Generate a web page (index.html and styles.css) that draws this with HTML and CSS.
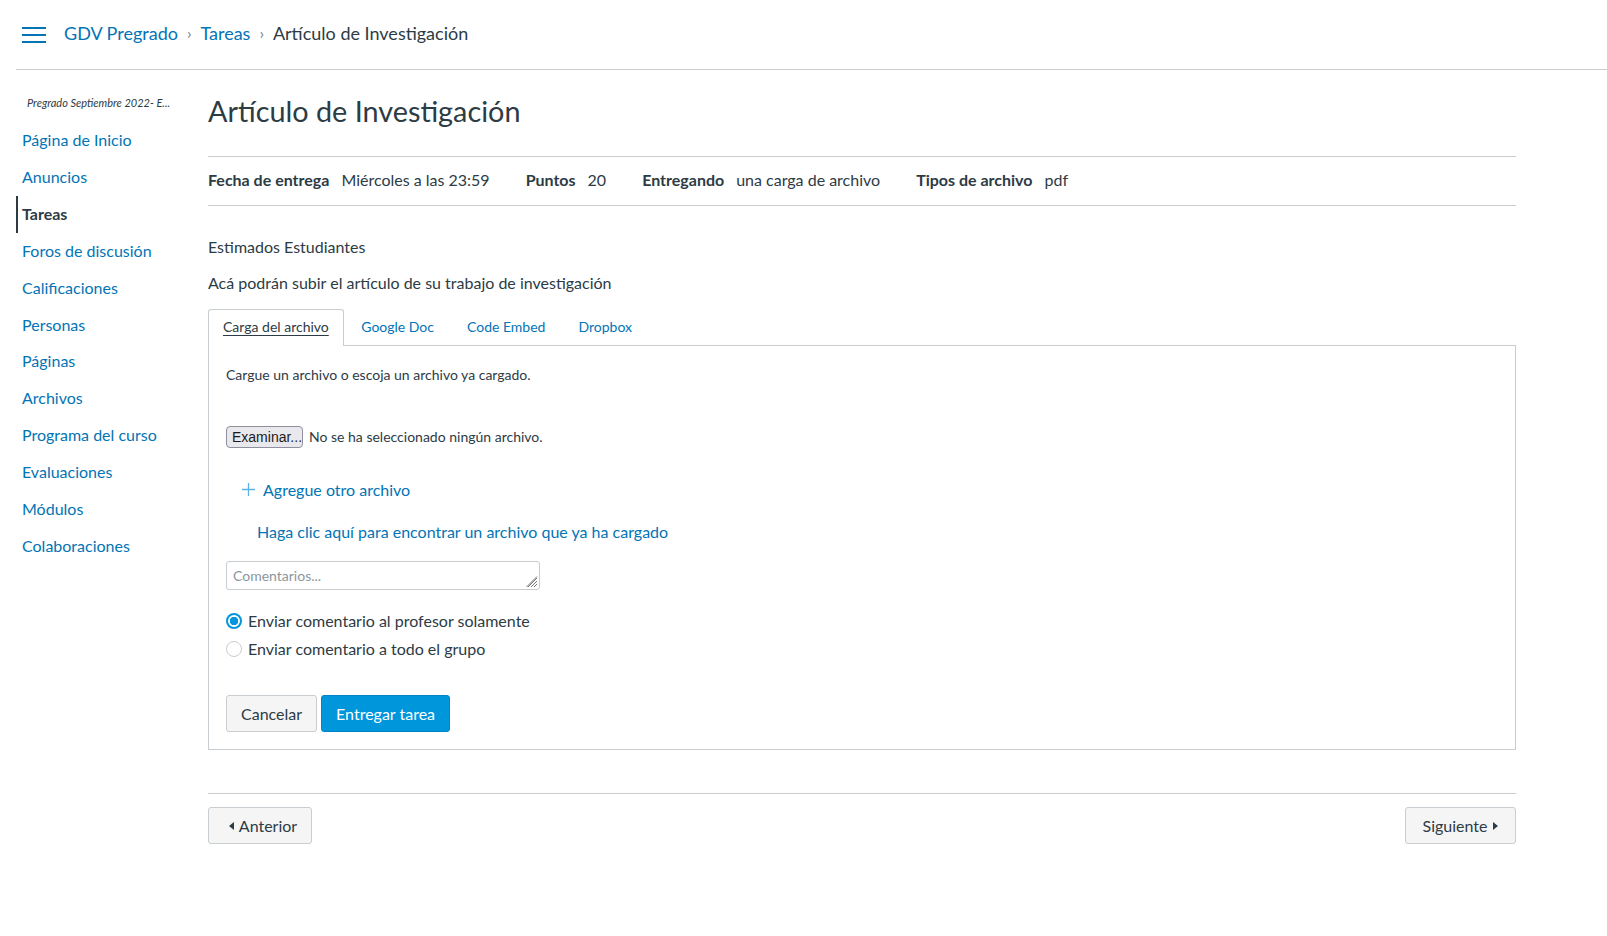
FILE: index.html
```html
<!DOCTYPE html>
<html lang="es">
<head>
<meta charset="utf-8">
<title>Artículo de Investigación</title>
<link rel="stylesheet" href="styles.css">
</head>
<body>
<header class="topbar">
  <button class="hamburger" aria-label="Menú">
    <svg width="24" height="18" viewBox="0 0 24 18"><rect x="0" y="0" width="24" height="2" fill="#0374b5"/><rect x="0" y="7" width="24" height="2" fill="#0374b5"/><rect x="0" y="14" width="24" height="2" fill="#0374b5"/></svg>
  </button>
  <nav class="crumbs">
    <a href="#">GDV Pregrado</a>
    <span class="sep">›</span>
    <a href="#">Tareas</a>
    <span class="sep">›</span>
    <span class="current">Artículo de Investigación</span>
  </nav>
</header>
<div class="layout">
  <aside class="sidebar">
    <div class="course">Pregrado Septiembre 2022- E...</div>
    <ul class="nav">
      <li><a href="#">Página de Inicio</a></li>
      <li><a href="#">Anuncios</a></li>
      <li class="active"><a href="#">Tareas</a></li>
      <li><a href="#">Foros de discusión</a></li>
      <li><a href="#">Calificaciones</a></li>
      <li><a href="#">Personas</a></li>
      <li><a href="#">Páginas</a></li>
      <li><a href="#">Archivos</a></li>
      <li><a href="#">Programa del curso</a></li>
      <li><a href="#">Evaluaciones</a></li>
      <li><a href="#">Módulos</a></li>
      <li><a href="#">Colaboraciones</a></li>
    </ul>
  </aside>
  <main class="main">
    <h1 class="title">Artículo de Investigación</h1>
    <div class="details">
      <span class="item"><b>Fecha de entrega</b><span>Miércoles a las 23:59</span></span>
      <span class="item"><b>Puntos</b><span>20</span></span>
      <span class="item"><b>Entregando</b><span>una carga de archivo</span></span>
      <span class="item"><b>Tipos de archivo</b><span>pdf</span></span>
    </div>
    <div class="desc">
      <p>Estimados Estudiantes</p>
      <p>Acá podrán subir el artículo de su trabajo de investigación</p>
    </div>
    <ul class="tabs">
      <li class="tab active"><a href="#">Carga del archivo</a></li>
      <li class="tab"><a href="#">Google Doc</a></li>
      <li class="tab"><a href="#">Code Embed</a></li>
      <li class="tab"><a href="#">Dropbox</a></li>
    </ul>
    <div class="panel">
      <p class="hint">Cargue un archivo o escoja un archivo ya cargado.</p>
      <div class="file-row">
        <span class="file-btn">Examinar...</span>
        <span class="file-text">No se ha seleccionado ningún archivo.</span>
      </div>
      <div class="add-row">
        <svg class="plus" width="13" height="13" viewBox="0 0 13 13"><path d="M6.5 0v13M0 6.5h13" stroke="#5db2e6" stroke-width="1.3" fill="none"/></svg>
        <a href="#">Agregue otro archivo</a>
      </div>
      <div class="find-row"><a href="#">Haga clic aquí para encontrar un archivo que ya ha cargado</a></div>
      <div class="comment">
        <span class="placeholder">Comentarios...</span>
        <svg class="grip" width="12" height="12" viewBox="0 0 12 12"><path d="M11 2L2 11M11 5L5 11M11 8L8 11M11 0.5L0.5 11" stroke="#666" stroke-width="0.9" fill="none"/></svg>
      </div>
      <div class="radios">
        <label class="radio"><span class="dot checked"></span>Enviar comentario al profesor solamente</label>
        <label class="radio"><span class="dot"></span>Enviar comentario a todo el grupo</label>
      </div>
      <div class="actions">
        <button class="btn">Cancelar</button>
        <button class="btn primary">Entregar tarea</button>
      </div>
    </div>
    <div class="pager">
      <button class="btn pbtn prev"><span class="tri left"></span>Anterior</button>
      <button class="btn pbtn next">Siguiente<span class="tri right"></span></button>
    </div>
  </main>
</div>
</body>
</html>
```
FILE: styles.css
```css
* { box-sizing: border-box; }
html, body { margin: 0; padding: 0; background: #fff; }
body {
  font-family: Lato, "Liberation Sans", sans-serif;
  color: #2d3b45;
  font-size: 16px;
}
a { color: #0374b5; text-decoration: none; }
p { margin: 0; }

.topbar {
  margin-left: 16px;
  height: 70px;
  border-bottom: 1px solid #c7cdd1;
  display: flex;
  align-items: center;
  padding-left: 6px;
}
.hamburger {
  background: none;
  border: 0;
  padding: 0;
  margin: 2px 0 0 0;
  width: 24px;
  height: 18px;
  display: block;
}
.hamburger svg { display: block; }
.crumbs {
  margin-left: 18px;
  font-size: 18px;
  display: flex;
  align-items: center;
  margin-top: -4px;
}
.crumbs .sep { color: #73818c; margin: 0 9px; font-size: 16px; }
.crumbs .current { color: #2d3b45; }

.layout { display: flex; }
.sidebar {
  width: 192px;
  margin-left: 16px;
  padding-top: 25px;
  flex: none;
}
.course {
  font-size: 11px;
  font-style: italic;
  line-height: 16px;
  padding-left: 11px;
  margin-bottom: 11px;
  white-space: nowrap;
}
.nav { list-style: none; margin: 0; padding: 0; }
.nav li {
  border-left: 2px solid transparent;
  padding: 8px 0 8px 4px;
  line-height: 20.9px;
  font-size: 16px;
}
.nav li.active { border-left-color: #2d3b45; }
.nav li.active a { color: #2d3b45; font-weight: bold; }

.main {
  width: 1308px;
  flex: none;
  padding-top: 22px;
}
.title {
  margin: 0;
  font-size: 28.8px;
  font-weight: normal;
  line-height: 38.5px;
  margin-bottom: 25px;
}
.details {
  border-top: 1px solid #c7cdd1;
  border-bottom: 1px solid #c7cdd1;
  padding: 11px 0 13px;
  line-height: 24px;
  display: flex;
}
.details .item { margin-right: 36px; }
.details b { margin-right: 12px; }

.desc { padding-top: 29px; }
.desc p { line-height: 24px; margin-bottom: 12px; }

.tabs {
  list-style: none;
  margin: 14px 0 0 0;
  padding: 0;
  display: flex;
  position: relative;
  z-index: 1;
}
.tab {
  border: 1px solid transparent;
  border-bottom: 0;
  padding: 0 15.5px;
  height: 37px;
  line-height: 34px;
  font-size: 14px;
  border-radius: 3px 3px 0 0;
}
.tab.active { border-color: #c7cdd1; background: #fff; padding: 0 14px; }
.tab.active + .tab { padding-left: 16.5px; }
.tab.active a { color: #2d3b45; text-decoration: underline; text-underline-offset: 3px; }

.panel {
  border: 1px solid #c7cdd1;
  margin-top: -1px;
  padding: 19px 17px 17px;
  font-size: 14px;
}
.hint { line-height: 20px; }
.file-row {
  display: flex;
  align-items: center;
  margin-top: 41px;
  height: 22px;
}
.file-btn {
  font-family: "Liberation Sans", Arial, sans-serif;
  font-size: 14px;
  color: #1b1b1b;
  background: #e9e9ed;
  border: 1px solid #8f8f9d;
  border-radius: 4px;
  height: 22px;
  line-height: 20px;
  padding: 0 5px;
  width: 77px;
  text-align: center;
}
.file-text { margin-left: 6px; }
.add-row {
  display: flex;
  align-items: center;
  margin-top: 31px;
  padding-left: 16px;
  font-size: 16px;
  line-height: 22px;
}
.plus { margin-right: 8px; }
.find-row {
  font-size: 16px;
  line-height: 22px;
  margin-top: 20px;
  padding-left: 31px;
}
.comment {
  position: relative;
  width: 314px;
  height: 29px;
  border: 1px solid #c7cdd1;
  border-radius: 3px;
  margin-top: 18px;
  padding: 5px 6px;
  line-height: 17px;
}
.placeholder { color: #8b969e; }
.grip { position: absolute; right: 1px; bottom: 1px; }
.radios { margin-top: 17px; font-size: 16px; }
.radio {
  display: flex;
  align-items: center;
  height: 28px;
  line-height: 28px;
}
.dot {
  width: 16px;
  height: 16px;
  border-radius: 50%;
  border: 1px solid #c7cdd1;
  margin: 0 6px 0 0;
  flex: none;
  background: #fff;
}
.dot.checked {
  border: 2px solid #0096db;
  background: radial-gradient(circle, #0096db 0 4px, #fff 4.5px);
}
.actions { margin-top: 32px; display: flex; gap: 4px; }
.btn {
  font-family: Lato, "Liberation Sans", sans-serif;
  font-size: 16px;
  color: #2d3b45;
  background: #f5f5f5;
  border: 1px solid #c7cdd1;
  border-radius: 3px;
  height: 37px;
  padding: 0 14px;
}
.btn.primary { background: #0096db; border-color: #0086c4; color: #fff; }

.pager {
  margin-top: 43px;
  border-top: 1px solid #c7cdd1;
  padding-top: 13px;
  display: flex;
  justify-content: space-between;
}
.pbtn { display: flex; align-items: center; width: 104px; justify-content: center; }
.pbtn.prev { padding-left: 20px; }
.pbtn.next { width: 111px; padding-right: 14px; }
.tri { display: inline-block; width: 0; height: 0; border-top: 4px solid transparent; border-bottom: 4px solid transparent; margin-top: 2px; }
.tri.left { border-right: 5px solid #2d3b45; margin-right: 5px; }
.tri.right { border-left: 5px solid #2d3b45; margin-left: 6px; }
```
